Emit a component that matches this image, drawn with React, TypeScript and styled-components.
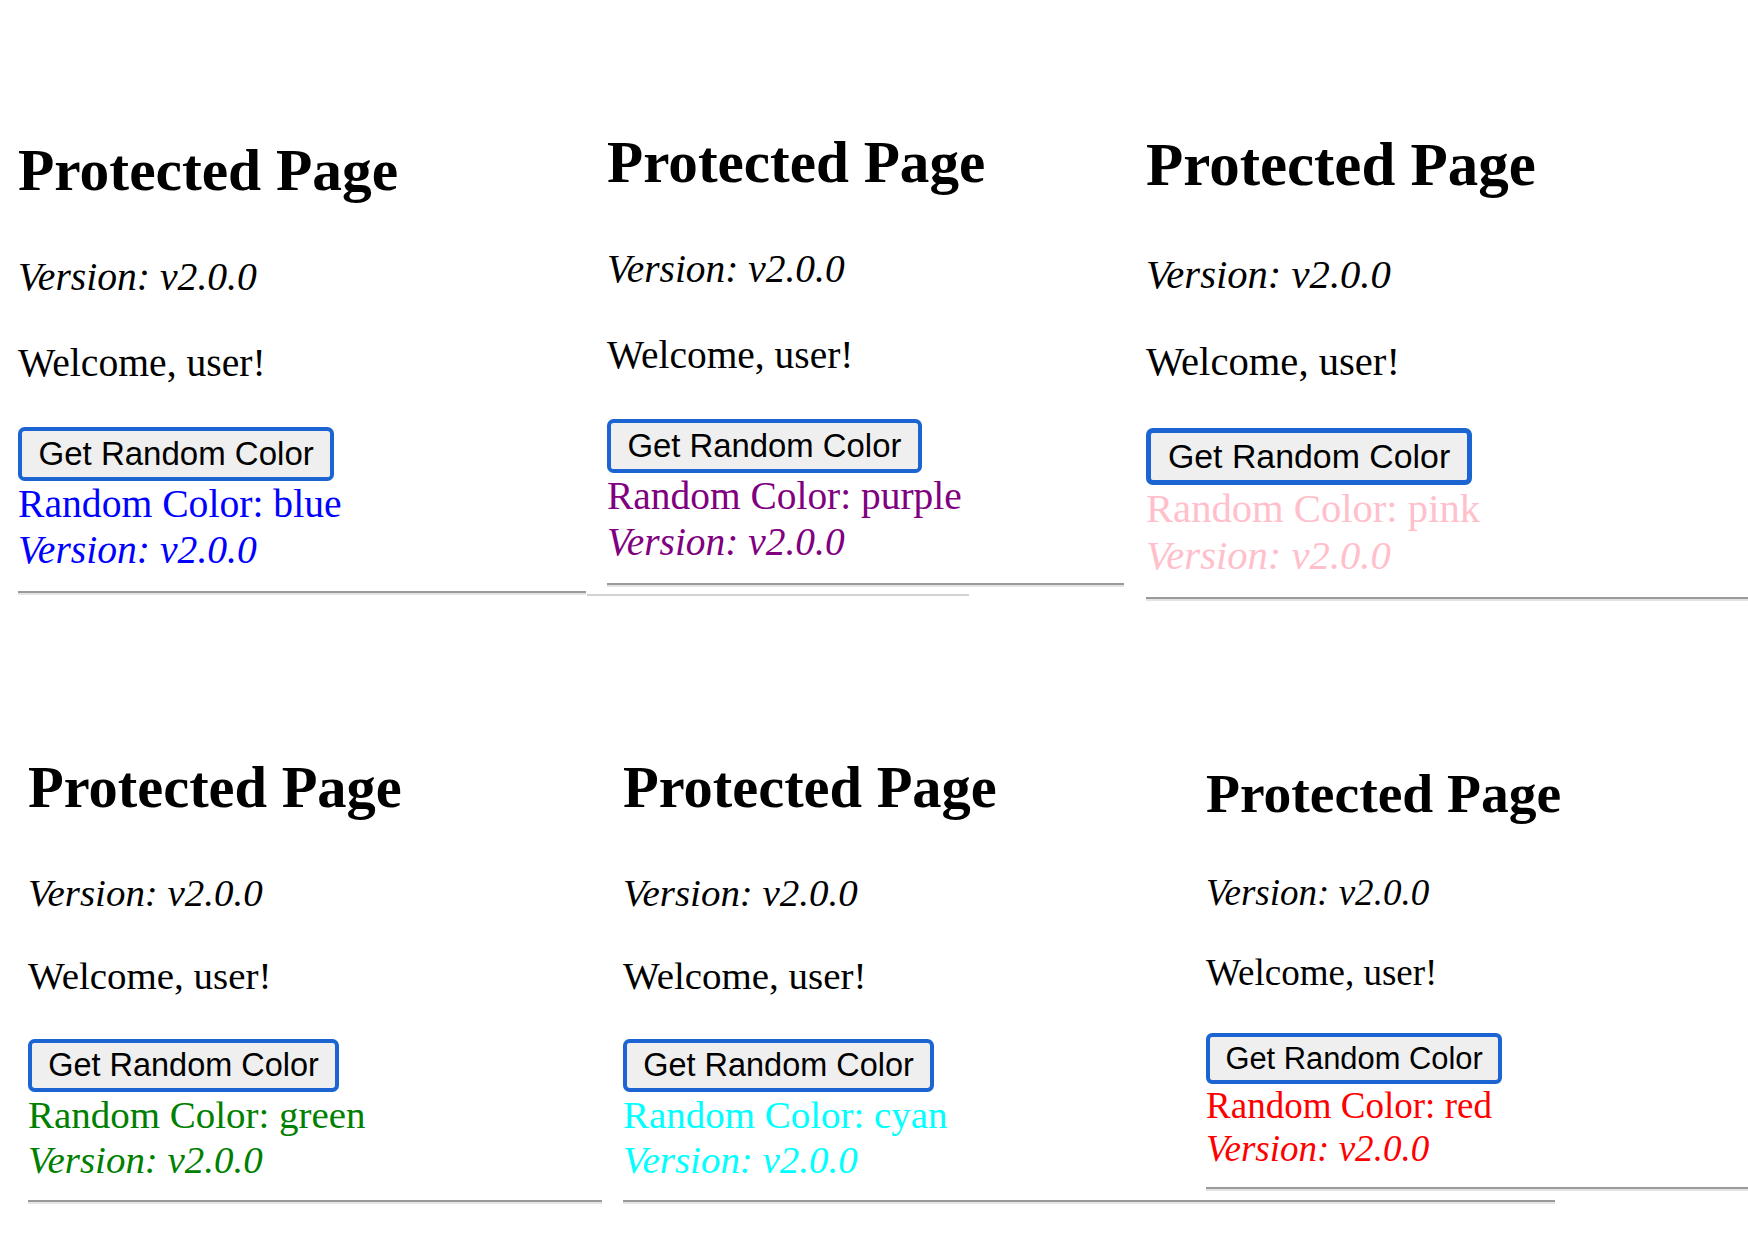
import React from "react";
import styled, { createGlobalStyle } from "styled-components";

const GlobalStyle = createGlobalStyle`
  html, body { margin: 0; padding: 0; background: #ffffff; }
  body { width: 1748px; height: 1240px; overflow: hidden; }
  #root { width: 1748px; height: 1240px; }
`;

const Collage = styled.main`
  display: flex;
  flex-direction: column;
  width: 1748px;
  height: 1240px;
  overflow: hidden;
`;

const Row = styled.div<{ $height: number }>`
  display: flex;
  flex: none;
  height: ${(p) => p.$height}px;
`;

const Shot = styled.section<{ $width: number; $left: number; $top: number; $scale: number }>`
  flex: none;
  box-sizing: border-box;
  width: ${(p) => p.$width}px;
  padding: ${(p) => p.$top}px 0 0 ${(p) => p.$left}px;
  font-family: "Liberation Serif", "Times New Roman", serif;
  font-size: ${(p) => 16 * p.$scale}px;
  line-height: normal;
  color: #000000;
  white-space: nowrap;
`;

const Title = styled.h2`
  margin: 0;
  font-size: 1.5em;
  font-weight: bold;
`;

const VersionLine = styled.p`
  margin: 1.245em 0 0;
  font-style: italic;
`;

const Welcome = styled.p`
  margin: 1em 0 0;
`;

const ColorButton = styled.button`
  display: block;
  margin: 1.25em 0 0;
  padding: 0.125em 0.5em;
  font-family: "Liberation Sans", Arial, sans-serif;
  font-size: 0.8333em;
  line-height: normal;
  color: #000000;
  background: #efefef;
  border: 0.15em solid #1b64d1;
  border-radius: 0.2em;
  cursor: pointer;
`;

const Result = styled.div<{ $color: string }>`
  color: ${(p) => p.$color};
`;

const ResultVersion = styled.div`
  font-style: italic;
`;

const Rule = styled.hr<{ $width: number }>`
  box-sizing: content-box;
  width: ${(p) => p.$width}px;
  height: 0;
  margin: 0.45em 0 0;
  border: none;
  border-top: 0.0625em solid #9a9a9a;
  border-bottom: 0.0625em solid #e4e4e4;
`;

const Trace = styled.div<{ $offset: number; $width: number }>`
  width: ${(p) => p.$width}px;
  height: 2px;
  margin: 7px 0 0 ${(p) => p.$offset}px;
  background: #d2d2d2;
`;

type ShotData = {
  color: string;
  width: number;
  left: number;
  top: number;
  scale: number;
  rule: number;
  trace?: { offset: number; width: number };
};

const rows: { height: number; shots: ShotData[] }[] = [
  {
    height: 640,
    shots: [
      { color: "blue", width: 590, left: 18, top: 136, scale: 2.477, rule: 568 },
      {
        color: "purple",
        width: 540,
        left: 17,
        top: 128,
        scale: 2.465,
        rule: 517,
        trace: { offset: -20, width: 382 },
      },
      { color: "pink", width: 618, left: 16, top: 130, scale: 2.54, rule: 640 },
    ],
  },
  {
    height: 600,
    shots: [
      { color: "green", width: 600, left: 28, top: 114, scale: 2.435, rule: 574 },
      { color: "cyan", width: 590, left: 23, top: 114, scale: 2.435, rule: 932 },
      { color: "red", width: 558, left: 16, top: 121, scale: 2.315, rule: 600 },
    ],
  },
];

const ProtectedShot: React.FC<{ data: ShotData }> = ({ data }) => (
  <Shot $width={data.width} $left={data.left} $top={data.top} $scale={data.scale}>
    <Title>Protected Page</Title>
    <VersionLine>Version: v2.0.0</VersionLine>
    <Welcome>Welcome, user!</Welcome>
    <ColorButton type="button">Get Random Color</ColorButton>
    <Result $color={data.color}>
      <div>Random Color: {data.color}</div>
      <ResultVersion>Version: v2.0.0</ResultVersion>
    </Result>
    <Rule $width={data.rule} />
    {data.trace && <Trace $offset={data.trace.offset} $width={data.trace.width} />}
  </Shot>
);

export default function App() {
  return (
    <>
      <GlobalStyle />
      <Collage>
        {rows.map((row, i) => (
          <Row key={i} $height={row.height}>
            {row.shots.map((s) => (
              <ProtectedShot key={s.color} data={s} />
            ))}
          </Row>
        ))}
      </Collage>
    </>
  );
}
